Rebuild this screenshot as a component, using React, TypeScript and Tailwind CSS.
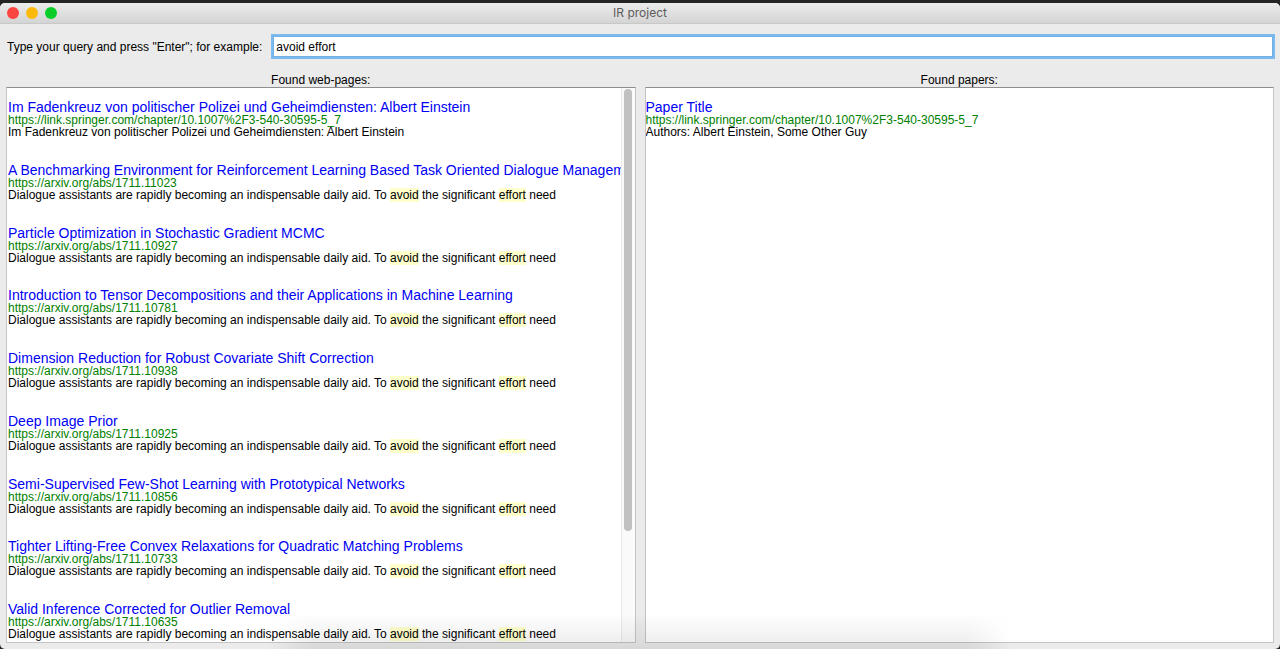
import React, { useState } from "react";

type Result = { title: string; url: string; summary: string };

const DIALOGUE =
  "Dialogue assistants are rapidly becoming an indispensable daily aid. To avoid the significant effort need";

const webPages: Result[] = [
  {
    title: "Im Fadenkreuz von politischer Polizei und Geheimdiensten: Albert Einstein",
    url: "https://link.springer.com/chapter/10.1007%2F3-540-30595-5_7",
    summary: "Im Fadenkreuz von politischer Polizei und Geheimdiensten: Albert Einstein",
  },
  {
    title: "A Benchmarking Environment for Reinforcement Learning Based Task Oriented Dialogue Management",
    url: "https://arxiv.org/abs/1711.11023",
    summary: DIALOGUE,
  },
  {
    title: "Particle Optimization in Stochastic Gradient MCMC",
    url: "https://arxiv.org/abs/1711.10927",
    summary: DIALOGUE,
  },
  {
    title: "Introduction to Tensor Decompositions and their Applications in Machine Learning",
    url: "https://arxiv.org/abs/1711.10781",
    summary: DIALOGUE,
  },
  {
    title: "Dimension Reduction for Robust Covariate Shift Correction",
    url: "https://arxiv.org/abs/1711.10938",
    summary: DIALOGUE,
  },
  { title: "Deep Image Prior", url: "https://arxiv.org/abs/1711.10925", summary: DIALOGUE },
  {
    title: "Semi-Supervised Few-Shot Learning with Prototypical Networks",
    url: "https://arxiv.org/abs/1711.10856",
    summary: DIALOGUE,
  },
  {
    title: "Tighter Lifting-Free Convex Relaxations for Quadratic Matching Problems",
    url: "https://arxiv.org/abs/1711.10733",
    summary: DIALOGUE,
  },
  {
    title: "Valid Inference Corrected for Outlier Removal",
    url: "https://arxiv.org/abs/1711.10635",
    summary: DIALOGUE,
  },
];

const papers: Result[] = [
  {
    title: "Paper Title",
    url: "https://link.springer.com/chapter/10.1007%2F3-540-30595-5_7",
    summary: "Authors: Albert Einstein, Some Other Guy",
  },
];

function Highlighted({ text }: { text: string }) {
  return (
    <>
      {text.split(/\b(avoid|effort)\b/).map((part, i) =>
        i % 2 ? (
          <mark key={i} className="bg-[#ffffcc] text-black">
            {part}
          </mark>
        ) : (
          part
        ),
      )}
    </>
  );
}

function ResultItem({ title, url, summary }: Result) {
  return (
    <li className="whitespace-nowrap text-[12px]">
      <a href={url} className="block text-[14px] leading-[14px] text-[#0000f5]">
        {title}
      </a>
      <a href={url} className="block leading-[12px] text-[#008000]">
        {url}
      </a>
      <p className="leading-[13px]">
        <Highlighted text={summary} />
      </p>
    </li>
  );
}

function Panel({ label, results, scrollbar }: { label: string; results: Result[]; scrollbar?: boolean }) {
  return (
    <section className="flex min-w-0 flex-1 flex-col">
      <h2 className="text-center text-[12px] leading-[14px]">{label}</h2>
      <div className="flex min-h-0 flex-1 overflow-hidden border border-[#c4c4c4] border-t-[#8e8e8e] bg-white">
        <ul
          className={`flex min-w-0 flex-1 flex-col overflow-hidden pt-3 pb-px ${scrollbar ? "justify-between pl-px" : ""}`}
        >
          {results.map((r) => (
            <ResultItem key={r.title} {...r} />
          ))}
        </ul>
        {scrollbar && (
          <div className="flex w-3.5 flex-col items-center border-l border-[#ececec] bg-[#fafafa] pt-px">
            <div className="h-4/5 w-2 rounded-full bg-[#c1c1c1]" />
          </div>
        )}
      </div>
    </section>
  );
}

export default function App() {
  const [query, setQuery] = useState("avoid effort");
  return (
    <div className="relative h-screen bg-[#222524] pt-[3px] font-['Liberation_Sans',Arial,sans-serif] text-black">
      <div className="flex h-full flex-col overflow-hidden rounded-[5px] bg-[#ebebeb]">
        <header className="grid h-[21px] shrink-0 grid-cols-[1fr_auto_1fr] items-center border-b border-[#c8c8c8] bg-linear-to-b from-[#ececec] to-[#d4d4d4] px-[7px]">
          <div className="flex gap-[7px]">
            <button aria-label="Close" className="size-3 rounded-full bg-[#fc4642]" />
            <button aria-label="Minimize" className="size-3 rounded-full bg-[#fdb90c]" />
            <button aria-label="Zoom" className="size-3 rounded-full bg-[#0bcd2a]" />
          </div>
          <h1 className="font-[Inter,sans-serif] text-[12px] leading-[20px] text-[#5c5c5c]">IR project</h1>
        </header>
        <form
          className="flex items-center gap-[11px] px-[7px] pt-3"
          onSubmit={(e) => e.preventDefault()}
        >
          <label htmlFor="query" className="text-[12px] whitespace-nowrap">
            Type your query and press "Enter"; for example:
          </label>
          <input
            id="query"
            value={query}
            onChange={(e) => setQuery(e.target.value)}
            className="h-[21px] min-w-0 flex-1 border border-[#72b1e6] bg-white px-0.5 text-[12px] outline-none ring-2 ring-[#7cb9ed]"
          />
        </form>
        <main className="flex min-h-0 flex-1 gap-[9px] px-1.5 pt-4 pb-1.5">
          <Panel label="Found web-pages:" results={webPages} scrollbar />
          <Panel label="Found papers:" results={papers} />
        </main>
      </div>
      {/* Soft shadow cast by the dock below the window */}
      <div
        aria-hidden="true"
        className="pointer-events-none absolute inset-x-[21%] bottom-0 h-9 bg-linear-to-t from-black/8 to-transparent [mask-image:linear-gradient(to_right,transparent,black_6%,black_94%,transparent)]"
      />
    </div>
  );
}
